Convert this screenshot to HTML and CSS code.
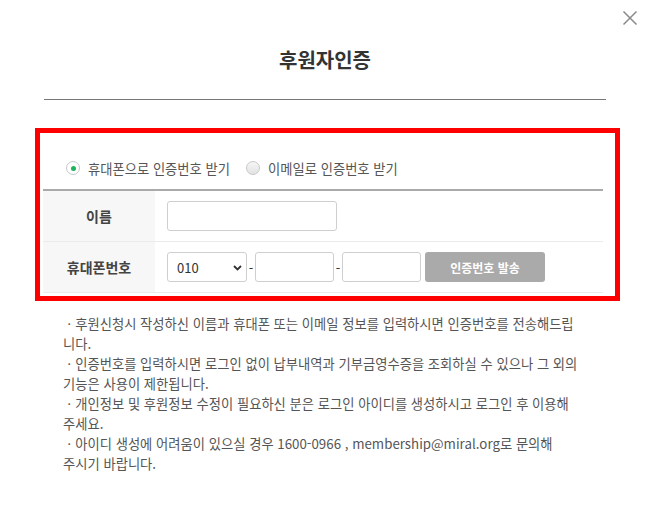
FILE: index.html
```html
<!DOCTYPE html>
<html lang="ko">
<head>
<meta charset="utf-8">
<title>후원자인증</title>
<link rel="stylesheet" href="styles.css">
</head>
<body>
<div class="modal">
  <button class="close" type="button" aria-label="닫기">
    <svg width="16" height="16" viewBox="0 0 16 16"><path d="M1.5 1.5L14.5 14.5M14.5 1.5L1.5 14.5" stroke="#8a8a8a" stroke-width="1.5" fill="none"/></svg>
  </button>
  <div class="title-wrap"><h2 class="title">후원자인증</h2></div>
  <div class="auth-box">
    <div class="method">
      <label class="radio"><span class="dot checked"></span>휴대폰으로 인증번호 받기</label>
      <label class="radio"><span class="dot"></span>이메일로 인증번호 받기</label>
    </div>
    <div class="form">
      <div class="row">
        <div class="th">이름</div>
        <div class="td"><input class="inp name" type="text"></div>
      </div>
      <div class="row">
        <div class="th">휴대폰번호</div>
        <div class="td">
          <div class="sel-wrap">
            <select class="sel"><option>010</option></select>
            <svg class="chev" width="9" height="6" viewBox="0 0 9 6"><path d="M1 1L4.5 4.5L8 1" stroke="#333" stroke-width="1.8" fill="none"/></svg>
          </div>
          <span class="dash">-</span>
          <input class="inp ph" type="text">
          <span class="dash">-</span>
          <input class="inp ph" type="text">
          <button class="send" type="button">인증번호 발송</button>
        </div>
      </div>
    </div>
  </div>
  <ul class="notes">
    <li>ㆍ후원신청시 작성하신 이름과 휴대폰 또는 이메일 정보를 입력하시면 인증번호를 전송해드립니다.</li>
    <li>ㆍ인증번호를 입력하시면 로그인 없이 납부내역과 기부금영수증을 조회하실 수 있으나 그 외의 기능은 사용이 제한됩니다.</li>
    <li>ㆍ개인정보 및 후원정보 수정이 필요하신 분은 로그인 아이디를 생성하시고 로그인 후 이용해<br>주세요.</li>
    <li>ㆍ아이디 생성에 어려움이 있으실 경우 1600-0966 , membership@miral.org로 문의해<br>주시기 바랍니다.</li>
  </ul>
</div>
</body>
</html>
```

FILE: styles.css
```css
* { box-sizing: border-box; }
html, body { margin: 0; padding: 0; background: #fff; }
body {
  font-family: "Noto Sans CJK KR", "Noto Sans", sans-serif;
  color: #555;
}
.modal {
  position: relative;
  width: 650px;
  height: 515px;
  overflow: hidden;
}
.close {
  position: absolute;
  left: 622px;
  top: 10px;
  width: 16px;
  height: 16px;
  padding: 0;
  border: 0;
  background: none;
  line-height: 0;
}
.title-wrap {
  margin: 0 44px;
  padding: 47px 0 26px;
  border-bottom: 1px solid #777;
}
.title {
  margin: 0;
  font-size: 20px;
  line-height: 26px;
  font-weight: 700;
  color: #333;
  text-align: center;
}
.auth-box {
  margin: 28px 30px 0 35px;
  border: 5px solid #ff0000;
  padding: 0 12px 3px 3px;
}
.method {
  height: 56px;
  padding: 14px 0 0 23px;
  display: flex;
  align-items: center;
}
.radio {
  display: flex;
  align-items: center;
  font-size: 13.3px;
  color: #555;
  margin-right: 16px;
}
.dot {
  width: 14px;
  height: 14px;
  border-radius: 50%;
  border: 1px solid #c8c8c8;
  background: linear-gradient(#f6f6f6, #e2e2e2);
  margin-right: 8px;
  position: relative;
  flex: none;
}
.dot.checked { background: #fff; }
.dot.checked::after {
  content: "";
  position: absolute;
  left: 3.5px;
  top: 3.5px;
  width: 5px;
  height: 5px;
  border-radius: 50%;
  background: #1fb35c;
}
.form { border-top: 2px solid #aaa; }
.row {
  display: flex;
  height: 51px;
  border-bottom: 1px solid #ebebeb;
}
.th {
  width: 112px;
  background: #f7f7f7;
  display: flex;
  align-items: center;
  justify-content: center;
  font-size: 14px;
  font-weight: 700;
  color: #444;
}
.td {
  flex: 1;
  display: flex;
  align-items: center;
  padding-left: 12px;
}
.inp {
  height: 30px;
  border: 1px solid #cfcfcf;
  border-radius: 3px;
  background: #fff;
  padding: 0 8px;
  font: inherit;
  outline: none;
}
.inp.name { width: 170px; }
.inp.ph { width: 79px; }
.sel-wrap {
  position: relative;
  width: 80px;
  height: 30px;
}
.sel {
  appearance: none;
  -webkit-appearance: none;
  width: 100%;
  height: 100%;
  border: 1px solid #cfcfcf;
  border-radius: 3px;
  background: #fff;
  padding: 0 0 0 9px;
  font-family: inherit;
  font-size: 13px;
  color: #333;
  outline: none;
}
.chev {
  position: absolute;
  right: 5px;
  top: 13px;
  pointer-events: none;
}
.dash {
  width: 8px;
  text-align: center;
  font-size: 13px;
  color: #333;
}
.send {
  margin-left: 4px;
  width: 120px;
  height: 30px;
  border: 0;
  border-radius: 3px;
  background: #aaa;
  color: #fff;
  font-family: inherit;
  font-size: 12px;
  font-weight: 700;
}
.notes {
  list-style: none;
  margin: 13px 0 0 63px;
  padding: 0;
  width: 522px;
  font-size: 13.3px;
  line-height: 20px;
  color: #555;
}
```
